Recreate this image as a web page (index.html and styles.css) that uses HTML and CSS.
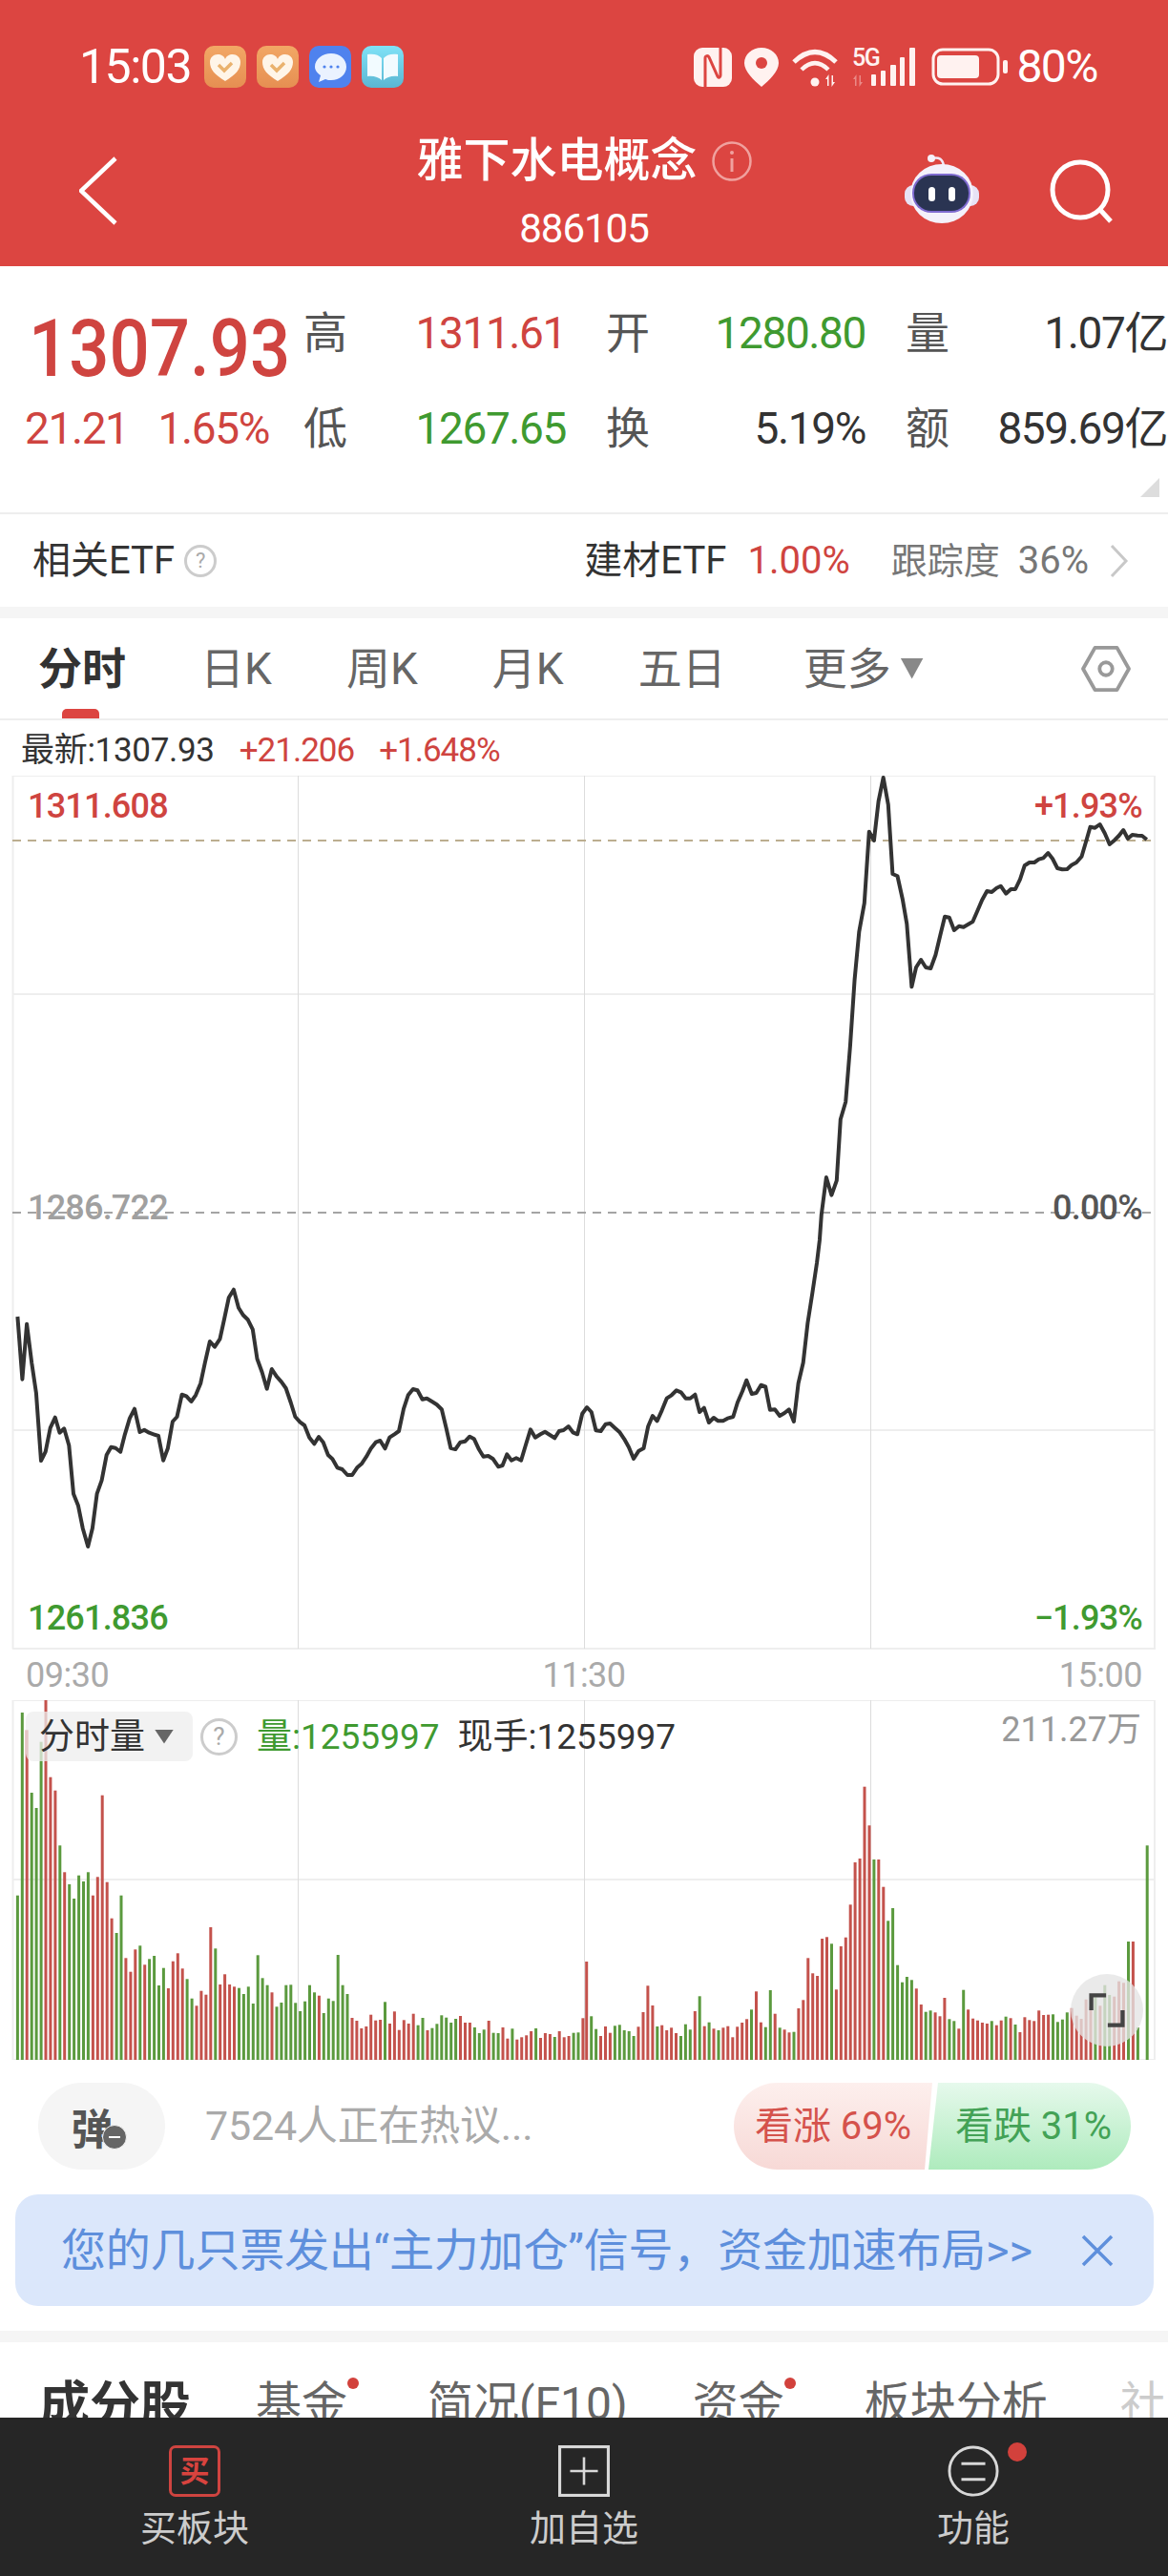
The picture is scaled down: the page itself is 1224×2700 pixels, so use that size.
FILE: index.html
```html
<!DOCTYPE html>
<html lang="zh-CN">
<head>
  <meta charset="UTF-8">
  <meta name="viewport" content="width=device-width, initial-scale=1.0">
  <title>雅下水电概念 886105</title>
  <link rel="stylesheet" href="styles.css">
</head>
<body>

<div class="page">

  <header class="top-header">
    <div class="status-bar">
      <div class="status-left">
        <span class="status-time">15:03</span>
        <svg class="app-icon" viewBox="0 0 44 44"><defs><linearGradient id="orangeBg" x1="0" y1="0" x2="0" y2="1"><stop offset="0" stop-color="#f2a765"/><stop offset="1" stop-color="#e68f52"/></linearGradient><linearGradient id="cyanBg" x1="0" y1="0" x2="0" y2="1"><stop offset="0" stop-color="#80e2f7"/><stop offset="1" stop-color="#5bb6d2"/></linearGradient></defs><rect width="44" height="44" rx="10" fill="url(#orangeBg)"/><path d="M22 37C11 30 6 25 6 17c0-5 4-8 8-8 4 0 7 2 8 5 1-3 4-5 8-5 4 0 8 3 8 8 0 8-5 13-16 20z" fill="#fff5e8"/><path d="M15 20l6 6 8-8" fill="none" stroke="#eab26e" stroke-width="3.5"/></svg>
        <svg class="app-icon" viewBox="0 0 44 44"><rect width="44" height="44" rx="10" fill="url(#orangeBg)"/><path d="M22 37C11 30 6 25 6 17c0-5 4-8 8-8 4 0 7 2 8 5 1-3 4-5 8-5 4 0 8 3 8 8 0 8-5 13-16 20z" fill="#fff5e8"/><path d="M15 20l6 6 8-8" fill="none" stroke="#eab26e" stroke-width="3.5"/></svg>
        <svg class="app-icon" viewBox="0 0 44 44"><rect width="44" height="44" rx="10" fill="#4f82ee"/><path d="M23 8c9 0 16 6 16 14s-7 14-16 14c-2 0-4 0-6-1l-7 3 2-7c-3-2-6-5-6-9C6 14 14 8 23 8z" fill="#eaf2ff"/><circle cx="16" cy="22" r="1.6" fill="#4f82ee"/><circle cx="23" cy="22" r="1.6" fill="#4f82ee"/><circle cx="30" cy="22" r="1.6" fill="#4f82ee"/></svg>
        <svg class="app-icon" viewBox="0 0 44 44"><rect width="44" height="44" rx="10" fill="url(#cyanBg)"/><path d="M6 9c6-1 12 0 15 4v23c-3-3-9-5-15-4zM38 9c-6-1-12 0-15 4v23c3-3 9-5 15-4z" fill="#f2fbff"/></svg>
      </div>
      <div class="status-right">
        <svg class="st-nfc" viewBox="0 0 40 41"><rect width="40" height="41" rx="9" fill="#fff2f0"/><path d="M12 41V11c0-3 3-3 4-1l9 20c1 2 3 1 3-1V0" fill="none" stroke="#dc4541" stroke-width="3"/></svg>
        <svg class="st-pin" viewBox="0 0 36 41"><path d="M18 0c10 0 18 7 18 16 0 9-10 18-18 25C10 34 0 25 0 16 0 7 8 0 18 0z" fill="#fff2f0"/><circle cx="18" cy="16" r="6" fill="#dc4541"/></svg>
        <svg class="st-wifi" viewBox="0 0 50 41" fill="#fff2f0"><path d="M2 15Q24-6 46 15" fill="none" stroke="#fff2f0" stroke-width="5"/><path d="M10 23Q24 9 38 23" fill="none" stroke="#fff2f0" stroke-width="4.5"/><circle cx="24" cy="36" r="4.5"/><path d="M37 40V33h-2l3.5-5 0 12zM43 29v7h2l-3.5 5 0-12z"/></svg>
        <svg class="st-signal" viewBox="0 -6 66 47" fill="#fff2f0"><text x="0" y="19" class="st-5g">5G</text><path d="M3 40v-7H1l3.5-5 0 12zM9 29v7h2l-3.5 5 0-12z" opacity=".4"/><rect x="20" y="28" width="5" height="12" rx="1"/><rect x="30" y="24" width="5" height="16" rx="1"/><rect x="40" y="18" width="6" height="22" rx="1"/><rect x="50" y="10" width="5" height="30" rx="1"/><rect x="60" y="0" width="6" height="40" rx="1"/></svg>
        <svg class="st-battery" viewBox="0 0 80 41" fill="#fff2f0"><rect x="2" y="2" width="68" height="36" rx="10" fill="none" stroke="#fff2f0" stroke-width="3"/><rect x="6" y="8" width="44" height="24" rx="4"/><rect x="75" y="13" width="5" height="14" rx="2"/></svg>
        <span class="status-pct">80%</span>
      </div>
    </div>
    <div class="nav-bar">
      <svg class="nav-back" viewBox="0 0 40 72"><path d="M38 2L2 36l36 34" fill="none" stroke="#fff" stroke-width="4.5"/></svg>
      <div class="nav-title">
        <div class="nav-name">雅下水电概念<svg class="nav-info" viewBox="0 0 42 42"><circle cx="21" cy="21" r="19.5" fill="none" stroke="#f0a19e" stroke-width="2.5"/><circle cx="21" cy="12" r="2" fill="#f0a19e"/><path d="M21 18v14" stroke="#f0a19e" stroke-width="3"/></svg></div>
        <div class="nav-code">886105</div>
      </div>
      <svg class="nav-robot" viewBox="948 162 78 72"><path d="M977 166c7-2 11 1 12 8" fill="none" stroke="#f2e8f6" stroke-width="2.5"/><circle cx="976" cy="166" r="4" fill="#f6f1fa"/><rect x="948" y="194" width="78" height="22" rx="9" fill="#e7e2f5"/><ellipse cx="987" cy="203" rx="33" ry="31" fill="#f4f1fb"/><rect x="956" y="182" width="61" height="41" rx="20" fill="#7f6bd0"/><rect x="958" y="184" width="57" height="37" rx="18" fill="#2a3452"/><rect x="973" y="196" width="7" height="15" rx="3.5" fill="#fff"/><rect x="994" y="196" width="7" height="15" rx="3.5" fill="#fff"/></svg>
      <svg class="nav-search" viewBox="0 0 68 68"><circle cx="32" cy="32" r="29" fill="none" stroke="#fff" stroke-width="5"/><path d="M53 53l11 12" stroke="#fff" stroke-width="5"/></svg>
    </div>
  </header>

  <section class="quote">
    <div class="quote-price">1307.93</div>
    <span class="q-label">高</span><span class="q-value up">1311.61</span>
    <span class="q-label">开</span><span class="q-value down">1280.80</span>
    <span class="q-label">量</span><span class="q-value">1.07亿</span>
    <div class="quote-change"><span>21.21</span><span>1.65%</span></div>
    <span class="q-label">低</span><span class="q-value down">1267.65</span>
    <span class="q-label">换</span><span class="q-value">5.19%</span>
    <span class="q-label">额</span><span class="q-value">859.69亿</span>
    <span class="quote-corner"></span>
  </section>

  <section class="etf-row">
    <div class="etf-left">相关ETF<span class="help-dot small">?</span></div>
    <div class="etf-right">
      <span class="etf-name">建材ETF</span>
      <span class="etf-pct">1.00%</span>
      <span class="etf-track">跟踪度</span>
      <span class="etf-track-val">36%</span>
      <svg class="etf-arrow" viewBox="0 0 20 36"><path d="M2 2l15 16L2 34" fill="none" stroke="#c8c8c8" stroke-width="3"/></svg>
    </div>
  </section>

  <div class="band"></div>

  <nav class="period-tabs">
    <span class="period active">分时</span>
    <span class="period">日K</span>
    <span class="period">周K</span>
    <span class="period">月K</span>
    <span class="period">五日</span>
    <span class="period more">更多<i class="caret"></i></span>
    <svg class="period-set" viewBox="0 0 54 50"><path d="M15 2h24l13 23-13 23H15L2 25z" fill="none" stroke="#999" stroke-width="4" stroke-linejoin="round"/><circle cx="27" cy="25" r="7" fill="none" stroke="#999" stroke-width="4"/></svg>
  </nav>

  <div class="latest-row">
    <span class="latest-text">最新:1307.93</span>
    <span class="latest-up up">+21.206</span>
    <span class="latest-up up">+1.648%</span>
  </div>

  <section class="price-chart">
    <svg id="priceSvg" class="chart-svg" viewBox="0 813 1224 916"></svg>
    <span class="axis tl up">1311.608</span>
    <span class="axis tr up">+1.93%</span>
    <span class="axis ml grey">1286.722</span>
    <span class="axis mr dark">0.00%</span>
    <span class="axis bl down">1261.836</span>
    <span class="axis br down">−1.93%</span>
  </section>

  <div class="time-row"><span>09:30</span><span>11:30</span><span>15:00</span></div>

  <section class="volume-chart">
    <svg id="volSvg" class="chart-svg" viewBox="0 1782 1224 378"></svg>
    <div class="vol-info">
      <span class="vol-chip">分时量<i class="caret dark"></i></span>
      <span class="help-dot">?</span>
      <span class="vol-amount down">量:1255997</span>
      <span class="vol-now">现手:1255997</span>
    </div>
    <span class="vol-max">211.27万</span>
    <button class="expand-btn"><svg viewBox="0 0 44 44"><path d="M3 22V4h18M41 22v18H23" fill="none" stroke="#444" stroke-width="5"/></svg></button>
  </section>

  <section class="talk-row">
    <div class="talk-left">
      <div class="danmu-btn">弹<i class="danmu-minus"></i></div>
      <span class="talk-text">7524人正在热议...</span>
    </div>
    <div class="vote">
      <span class="vote-up">看涨 69%</span>
      <span class="vote-down">看跌 31%</span>
    </div>
  </section>

  <section class="notice">
    <span class="notice-text">您的几只票发出“主力加仓”信号，资金加速布局&gt;&gt;</span>
    <svg class="notice-close" viewBox="0 0 34 34"><path d="M2 2l30 30M32 2L2 32" stroke="#5e8fdc" stroke-width="3.5"/></svg>
  </section>

  <div class="band"></div>

  <nav class="detail-tabs">
    <span class="detail active">成分股</span>
    <span class="detail dot">基金</span>
    <span class="detail">简况(F10)</span>
    <span class="detail dot">资金</span>
    <span class="detail">板块分析</span>
    <span class="detail faded">社</span>
  </nav>

  <footer class="bottom-bar">
    <div class="bar-item">
      <span class="buy-icon">买</span>
      <span class="bar-label">买板块</span>
    </div>
    <div class="bar-item">
      <svg class="bar-icon" viewBox="0 0 52 52"><rect x="1.5" y="1.5" width="49" height="49" fill="none" stroke="#d8d8d8" stroke-width="3"/><path d="M26 12v28M12 26h28" stroke="#d8d8d8" stroke-width="2.5"/></svg>
      <span class="bar-label">加自选</span>
    </div>
    <div class="bar-item">
      <svg class="bar-icon" viewBox="0 0 56 56"><circle cx="28" cy="28" r="26" fill="none" stroke="#d8d8d8" stroke-width="3"/><path d="M15 20h26M15 37h26" stroke="#d8d8d8" stroke-width="3"/></svg>
      <span class="bar-label">功能</span>
      <i class="bar-dot"></i>
    </div>
  </footer>

</div>

<script src="script.js"></script>
</body>
</html>
```

FILE: styles.css
```css
:root {
  --red: #dc4541;
  --up: #cf4440;
  --down: #3f9a30;
  --text: #333333;
  --band: #f5f5f5;
}

* {
  margin: 0;
  padding: 0;
  box-sizing: border-box;
}

html, body {
  width: 1224px;
  height: 2700px;
  overflow: hidden;
  background: #fff;
  font-family: Roboto, "Noto Sans CJK SC", sans-serif;
  color: var(--text);
}

.page {
  position: relative;
  width: 1224px;
  height: 2700px;
  overflow: hidden;
  display: flex;
  flex-direction: column;
}

.up { color: var(--up); }
.down { color: var(--down); }

.band {
  height: 12px;
  flex-shrink: 0;
  background: var(--band);
}

/* header */
.top-header {
  height: 279px;
  flex-shrink: 0;
  background: var(--red);
  color: #fff;
}

.status-bar {
  height: 124px;
  padding: 48px 74px 0 83px;
  display: flex;
  justify-content: space-between;
}

.status-left,
.status-right {
  height: 44px;
  display: flex;
  align-items: center;
}

.status-time {
  width: 131px;
  font-size: 50px;
  line-height: 1;
  letter-spacing: -1.5px;
}

.app-icon {
  width: 44px;
  height: 44px;
  margin-right: 11px;
}

.st-nfc { width: 40px; height: 41px; margin-right: 13px; }
.st-pin { width: 36px; height: 41px; margin-right: 14px; }
.st-wifi { width: 50px; height: 41px; margin-right: 13px; }
.st-signal { width: 66px; height: 47px; margin: 0 17px 6px 0; }
.st-battery { width: 80px; height: 41px; margin-right: 9px; }

.st-5g {
  font-size: 25px;
  font-weight: 500;
  letter-spacing: -1.5px;
}

.status-pct {
  font-size: 48px;
  line-height: 1;
  letter-spacing: -1.5px;
}

.nav-bar {
  position: relative;
  height: 155px;
}

.nav-back {
  position: absolute;
  left: 83px;
  top: 40px;
  width: 40px;
  height: 72px;
}

.nav-title {
  position: absolute;
  left: 0;
  right: 0;
  top: 19px;
  text-align: center;
}

.nav-name {
  display: inline-flex;
  align-items: center;
  gap: 15px;
  font-size: 49px;
  line-height: 52px;
  font-weight: 500;
}

.nav-info {
  width: 42px;
  height: 42px;
}

.nav-code {
  margin-top: 24px;
  font-size: 42px;
  line-height: 42px;
  letter-spacing: -1px;
}

.nav-robot {
  position: absolute;
  left: 948px;
  top: 38px;
  width: 78px;
  height: 72px;
}

.nav-search {
  position: absolute;
  left: 1100px;
  top: 43px;
  width: 68px;
  height: 68px;
}

/* quote */
.quote {
  position: relative;
  height: 260px;
  flex-shrink: 0;
  padding-top: 20px;
  border-bottom: 2px solid #eeeeee;
  display: grid;
  grid-template-columns: 318px 46px 229px 88px 226px 88px 228px;
  grid-template-rows: 100px 100px;
  align-items: center;
}

.quote-price {
  margin: 33px 0 0 30px;
  font-size: 84px;
  line-height: 1;
  font-weight: 500;
  transform: scaleX(.885);
  transform-origin: left center;
  color: var(--up);
}

.quote-change {
  padding-left: 26px;
  display: flex;
  gap: 31px;
  font-size: 46px;
  line-height: 1;
  letter-spacing: -1.4px;
  color: var(--up);
}

.q-label {
  font-size: 46px;
  line-height: 1;
  text-align: right;
  color: #555;
}

.q-value {
  font-size: 46px;
  line-height: 1;
  letter-spacing: -1.4px;
  text-align: right;
  white-space: nowrap;
}

.quote-corner {
  position: absolute;
  right: 9px;
  top: 222px;
  width: 20px;
  height: 20px;
  background: #dddddd;
  clip-path: polygon(100% 0, 100% 100%, 0 100%);
}

/* etf */
.etf-row {
  height: 97px;
  flex-shrink: 0;
  padding: 0 41px 0 34px;
  display: flex;
  justify-content: space-between;
  align-items: center;
  font-size: 40px;
  line-height: 1;
}

.etf-left {
  display: flex;
  align-items: center;
  gap: 10px;
}

.etf-right {
  display: flex;
  align-items: center;
}

.etf-pct { margin-left: 22px; color: var(--up); }
.etf-track { margin-left: 43px; font-size: 38px; color: #777; }
.etf-track-val { margin-left: 19px; color: #777; }
.etf-arrow { width: 20px; height: 36px; margin-left: 22px; }

.help-dot {
  width: 38px;
  height: 38px;
  border: 3px solid #cccccc;
  border-radius: 50%;
  display: inline-flex;
  justify-content: center;
  align-items: center;
  font-size: 26px;
  color: #aaa;
}

.help-dot.small {
  width: 34px;
  height: 34px;
  font-size: 22px;
}

/* period tabs */
.period-tabs {
  position: relative;
  height: 107px;
  flex-shrink: 0;
  padding: 0 0 0 40px;
  border-bottom: 2px solid #eeeeee;
  display: flex;
  align-items: center;
  gap: 78px;
}

.period {
  font-size: 46px;
  line-height: 1;
  color: #666;
  display: flex;
  align-items: center;
}

.period.more {
  margin-left: 3px;
}

.period.active {
  font-weight: 700;
  color: var(--text);
}

.period.active::after {
  content: "";
  position: absolute;
  left: 65px;
  bottom: 0;
  width: 39px;
  height: 10px;
  border-radius: 5px 5px 0 0;
  background: var(--red);
}

.caret {
  display: inline-block;
  width: 24px;
  height: 22px;
  margin-left: 10px;
  background: #888;
  clip-path: polygon(0 0, 100% 0, 50% 100%);
}

.caret.dark {
  width: 20px;
  height: 15px;
  background: #666;
}

.period-set {
  position: absolute;
  left: 1132px;
  top: 29px;
  width: 54px;
  height: 48px;
}

/* latest */
.latest-row {
  height: 58px;
  flex-shrink: 0;
  padding: 4px 0 0 22px;
  display: flex;
  align-items: center;
  gap: 26px;
  font-size: 35px;
  line-height: 1;
  letter-spacing: -.3px;
}

.latest-up {
  letter-spacing: -1px;
}

/* charts */
.price-chart {
  position: relative;
  height: 916px;
  flex-shrink: 0;
}

.chart-svg {
  position: absolute;
  left: 0;
  top: 0;
  width: 1224px;
  height: 100%;
}

.axis {
  position: absolute;
  font-size: 36px;
  line-height: 36px;
  font-weight: 500;
  letter-spacing: -.8px;
}

.axis.tl, .axis.ml, .axis.bl { left: 29px; }
.axis.tr, .axis.mr, .axis.br { right: 27px; }
.axis.tl, .axis.tr { top: 14px; }
.axis.ml, .axis.mr { top: 435px; }
.axis.bl, .axis.br { top: 865px; }
.axis.grey { color: #a0a0a0; }
.axis.dark { color: #555; }

.time-row {
  height: 53px;
  flex-shrink: 0;
  padding: 0 27px 0 27px;
  display: flex;
  justify-content: space-between;
  align-items: center;
  font-size: 36px;
  line-height: 1;
  letter-spacing: -.5px;
  color: #aaaaaa;
}

.volume-chart {
  position: relative;
  height: 378px;
  flex-shrink: 0;
}

.vol-info {
  position: absolute;
  left: 27px;
  top: 12px;
  display: flex;
  align-items: center;
  font-size: 37px;
  line-height: 1;
}

.vol-chip {
  width: 175px;
  height: 52px;
  padding-left: 14px;
  border-radius: 8px;
  display: flex;
  align-items: center;
  background: rgba(238, 238, 238, .75);
}

.vol-info .help-dot {
  width: 39px;
  height: 39px;
  margin-left: 8px;
}

.vol-amount { margin-left: 20px; }
.vol-now { margin-left: 19px; }

.vol-max {
  position: absolute;
  right: 28px;
  top: 13px;
  font-size: 36px;
  line-height: 1;
  color: #999999;
}

.expand-btn {
  position: absolute;
  left: 1122px;
  top: 287px;
  width: 76px;
  height: 76px;
  border: none;
  border-radius: 50%;
  background: rgba(228, 228, 228, .78);
  display: flex;
  justify-content: center;
  align-items: center;
}

.expand-btn svg {
  width: 38px;
  height: 38px;
}

/* talk row */
.talk-row {
  height: 140px;
  flex-shrink: 0;
  padding: 23px 39px 26px 40px;
  display: flex;
  justify-content: space-between;
}

.talk-left {
  display: flex;
  align-items: center;
}

.danmu-btn {
  position: relative;
  width: 133px;
  height: 91px;
  padding-right: 20px;
  border-radius: 46px;
  background: var(--band);
  display: flex;
  justify-content: center;
  align-items: center;
  font-size: 44px;
  font-weight: 700;
  color: #555;
}

.danmu-minus {
  position: absolute;
  left: 67px;
  top: 44px;
  width: 26px;
  height: 26px;
  border-radius: 50%;
  border: 1px solid #f5f5f5;
  background: #666;
}

.danmu-minus::after {
  content: "";
  position: absolute;
  left: 6px;
  top: 11px;
  width: 12px;
  height: 2px;
  background: #fff;
}

.talk-text {
  margin-left: 42px;
  font-size: 43px;
  line-height: 1;
  color: #aaaaaa;
  letter-spacing: -.2px;
}

.vote {
  display: flex;
  font-size: 40px;
  line-height: 1;
}

.vote-up,
.vote-down {
  width: 212px;
  display: flex;
  justify-content: center;
  align-items: center;
}

.vote-up {
  width: 208px;
  border-radius: 46px 0 0 46px;
  background: linear-gradient(#fdefed, #f7d9d6);
  color: #d5524c;
  clip-path: polygon(0 0, 100% 0, calc(100% - 8px) 100%, 0 100%);
}

.vote-down {
  margin-left: -4px;
  padding-left: 8px;
  border-radius: 0 46px 46px 0;
  background: linear-gradient(#e6f9ec, #aeebbd);
  color: #43a256;
  clip-path: polygon(10px 0, 100% 0, 100% 100%, 0 100%);
}

/* notice */
.notice {
  height: 117px;
  flex-shrink: 0;
  margin: 0 15px 26px 16px;
  padding: 0 42px 0 48px;
  border-radius: 24px;
  background: #dbe7fb;
  display: flex;
  justify-content: space-between;
  align-items: center;
}

.notice-text {
  font-size: 47px;
  line-height: 1;
  letter-spacing: -.2px;
  color: #5e8fdc;
  white-space: nowrap;
}

.notice-close {
  width: 34px;
  height: 34px;
}

/* detail tabs */
.detail-tabs {
  padding: 41px 0 0 41px;
  display: flex;
  align-items: flex-start;
  gap: 76px;
  white-space: nowrap;
}

.detail {
  position: relative;
  font-size: 48px;
  line-height: 1;
  color: #666;
}

.detail.active {
  font-size: 53px;
  font-weight: 700;
  color: var(--text);
}

.detail.dot {
  margin: 0 8px 0 -8px;
}

.detail.dot::after {
  content: "";
  position: absolute;
  right: -12px;
  top: -4px;
  width: 12px;
  height: 12px;
  border-radius: 50%;
  background: #d2413c;
}

.detail.faded {
  color: #cccccc;
}

/* bottom bar */
.bottom-bar {
  position: absolute;
  left: 0;
  right: 0;
  bottom: 0;
  height: 166px;
  background: #262626;
  display: grid;
  grid-template-columns: 408px 408px 408px;
}

.bar-item {
  position: relative;
  padding-top: 29px;
  display: flex;
  flex-direction: column;
  align-items: center;
}

.bar-icon {
  width: 54px;
  height: 54px;
  flex-shrink: 0;
}

.buy-icon {
  width: 54px;
  height: 54px;
  border: 3px solid #cf4440;
  border-radius: 7px;
  display: flex;
  justify-content: center;
  align-items: center;
  font-size: 31px;
  font-weight: 700;
  line-height: 1;
  color: #d8433e;
}

.bar-label {
  margin-top: 14px;
  font-size: 38px;
  line-height: 1;
  color: #cccccc;
}

.bar-dot {
  position: absolute;
  left: 240px;
  top: 26px;
  width: 20px;
  height: 20px;
  border-radius: 50%;
  background: #d2413c;
}
```

FILE: script.js
```js
// price line, points read off in zoomed px: [originX, originY, x, y, x, y ...]
var NS = 'http://www.w3.org/2000/svg';

var lineLeft = [47,240,60,437,72,263,85,385,97,480,110,693,122,665,135,590,148,557,160,605,172,592,185,645,197,797,210,835,222,905,236,963,248,905,260,797,273,755,286,675,298,650,310,653,323,665,335,610,348,560,361,530,375,603,387,596,400,605,412,610,425,615,438,692,450,655,463,570,475,555,488,485,500,490,513,507,525,487,538,450,550,385,563,318,576,335,590,310,602,245,614,180,627,155,640,212,652,235,665,250,678,280,690,373,703,415,716,467,729,405,742,428,755,445,767,465,780,510,792,555,805,572,817,582,830,620,843,640,855,618,867,635,880,675,892,688,905,715,918,720,932,738,945,738,958,715,970,703,983,680,995,655,1008,635,1020,630,1033,655,1045,620,1058,610,1070,600,1083,530,1095,487,1108,468,1120,472,1133,500,1145,497,1160,508,1172,517,1185,532,1197,590,1209,653,1222,657,1235,635,1248,632,1260,617,1272,625,1285,658,1297,680,1310,678,1323,688,1337,712,1348,708,1360,673,1372,692,1385,685,1398,692,1410,645,1423,595,1436,620,1450,610,1462,602,1475,612,1488,622,1500,600,1512,597,1525,585,1537,604,1549,610,1562,545];
var lineMid = [8,525,20,540,32,598,45,600,58,578,70,576,83,590,96,604,108,625,120,650,133,687,147,662,160,654,172,585,184,552,196,568,209,535,222,497,235,487,248,472,260,478,273,497,285,497,298,485,310,540,322,527,335,573,348,558,360,568,373,568,385,560,400,555,412,510,425,475,436,440,450,483,462,480,475,455,487,460,499,533,512,532,525,552,538,543,550,532,563,570,575,450,588,385,600,260,612,170,625,70,632,0];
var lineRight = [637,1420,650,1302,664,1358,678,1312,688,1120,702,1065,714,890,726,680,738,530,752,440,765,215,778,243,790,120,803,45,816,130,828,348,841,355,855,430,866,505,879,703,891,642,904,618,917,642,930,645,943,603,956,540,968,482,980,485,993,525,1006,512,1018,515,1030,507,1043,498,1056,463,1068,430,1081,402,1094,405,1107,392,1118,386,1132,410,1145,396,1157,396,1170,365,1182,322,1195,312,1208,312,1220,302,1232,298,1245,282,1257,300,1270,330,1283,334,1296,333,1308,320,1321,312,1335,293,1347,245,1358,200,1371,203,1384,192,1397,220,1410,255,1423,242,1435,228,1447,210,1459,237,1471,225,1485,227,1497,228,1510,240];

var volLeft = '680g 105g 160r 357g 405g 197g 62r 308r 350r 523g 607r 645g 690g 617g 636g 607g 680r 622r 365r 638r 752r 798g 680g 877r 920r 850r 838g 898r 880g 870g 963g 908g 972r 887r 862r 910r 943g 1004g 1027r 980r 992r 780r 847g 960r 928r 960r 967r 971g 990g 967g 1020g 868g 940g 962g 985r 1030g 1017g 962g 961g 1018g 1044g 1013g 962g 985g 995r 1050g 1004g 1012g 867g 962g 990g 1065r 1074r 1098r 1092r 1055r 1073r 1071r 1015g 1083r 1045r 1103r 1072r 1083r 1052r 1088g 1065g 1104r 1097g 1084g 1057g 1064g 1080g 1068g 1059r 1080r 1080r 1095g 1113g 1102g 1074r 1112g 1113g 1095r 1130r 1099g 1133r 1126r 1120r 1107r 1098g 1128r 1113r 1116r 1125g 1107r 1126r 1122r 1112g 1111g 1066r'.split(' ');
var volRight = '888r 1060g 1100g 1122r 1092r 1112r 1090g 1087g 1104g 1107g 1122g 1093r 1047r 964r 1026r 1092g 1088r 1104r 1096r 1113r 1122g 1085g 1102g 1044r 997g 1091r 1079g 1099r 1104g 1096r 1091r 1126r 1093r 1080r 1069r 1039g 982r 1079r 1094g 978g 1052r 1096g 1102r 1111r 1109g 1035r 1009r 877r 925r 933r 816r 811r 832g 976r 840r 812r 709r 576r 564r 338r 460r 567g 567r 653r 760g 720g 899g 953g 936g 946g 973r 1023r 1046g 1042g 1048r 1060r 1002r 1069g 1075g 1099r 977g 1039r 1067r 1073r 1080r 1083r 1075g 1088r 1073r 1061g 1066r 1086g 1110r 1063r 1072r 1075r 1042r 1056r 1055r 1054g 1078g 1070g 1048g 1034r 1058r 1068r 1007r 1030r 1000g 1027r 962g 993g 998r 950r 955r 825g 825r 1095g 0n 523g'.split(' ');

function add(svg, tag, attrs) {
  var el = document.createElementNS(NS, tag);
  for (var k in attrs) el.setAttribute(k, attrs[k]);
  svg.appendChild(el);
  return el;
}

function hLine(svg, y, x1, x2, color, w, dash) {
  var attrs = { x1: x1, x2: x2, y1: y, y2: y, stroke: color, 'stroke-width': w };
  if (dash) attrs['stroke-dasharray'] = dash;
  add(svg, 'line', attrs);
}

function vLine(svg, x, y1, y2, color, w) {
  add(svg, 'line', { x1: x, x2: x, y1: y1, y2: y2, stroke: color, 'stroke-width': w });
}

function toPoints(arr, ox, oy) {
  var out = [];
  for (var i = 0; i < arr.length; i += 2) {
    out.push((ox + arr[i] / 2.56).toFixed(1) + ',' + (oy + arr[i + 1] / 3).toFixed(1));
  }
  return out;
}

// price chart
var price = document.getElementById('priceSvg');
[813, 1042, 1499, 1728].forEach(function (y) { hLine(price, y, 13, 1211, '#eeeeee', 2); });
[13.5, 1210].forEach(function (x) { vLine(price, x, 813, 1728, '#eeeeee', 2); });
[312.5, 612.5, 912.5].forEach(function (x) { vLine(price, x, 813, 1728, '#dcdcdc', 1); });
hLine(price, 881, 13, 1211, '#bcae90', 2, '9 7');
hLine(price, 1271, 13, 1211, '#a4a4a4', 2, '9 7');

var pts = toPoints(lineLeft, 0, 1300)
  .concat(toPoints(lineMid, 612, 1300))
  .concat(toPoints(lineRight, 612, 800));
add(price, 'polyline', {
  points: pts.join(' '),
  fill: 'none',
  stroke: '#333333',
  'stroke-width': 4,
  'stroke-linejoin': 'round'
});

// volume chart
var vol = document.getElementById('volSvg');
hLine(vol, 1782, 13, 1211, '#eeeeee', 2);
hLine(vol, 1970, 13, 1211, '#eeeeee', 2);
hLine(vol, 2158.5, 13, 1211, '#eeeeee', 1);
[13.5, 1210].forEach(function (x) { vLine(vol, x, 1782, 2159, '#eeeeee', 2); });
[312.5, 612.5, 912.5].forEach(function (x) { vLine(vol, x, 1782, 2159, '#dcdcdc', 1); });

function bars(list, ox, start, step) {
  list.forEach(function (item, i) {
    var top = parseInt(item, 10);
    var kind = item.slice(-1);
    if (kind === 'n') return;
    var y = 1760 + top / 3;
    add(vol, 'rect', {
      x: (ox + (start + i * step) / 2.56 - 1.5).toFixed(1),
      y: y.toFixed(1),
      width: 3,
      height: (2159 - y).toFixed(1),
      fill: kind === 'r' ? '#c4524c' : '#5b9a3e'
    });
  });
}

bars(volLeft, 0, 47, (1564 - 47) / (volLeft.length - 1));
bars(volRight, 612, 7, (1511 - 7) / (volRight.length - 1));
```
